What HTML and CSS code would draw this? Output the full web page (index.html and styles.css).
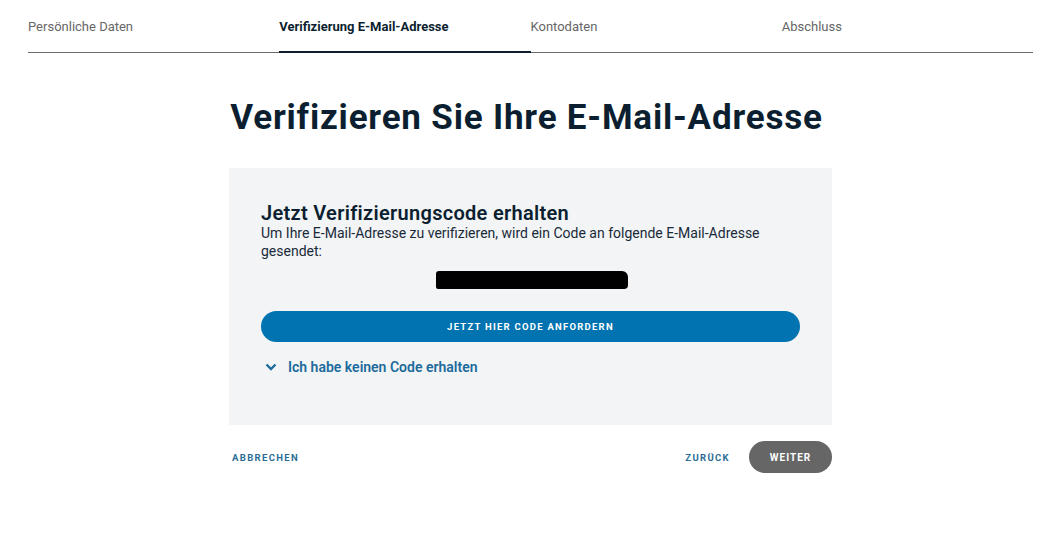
FILE: index.html
```html
<!DOCTYPE html>
<html lang="de">
<head>
    <meta charset="UTF-8">
    <meta name="viewport" content="width=device-width, initial-scale=1.0">
    <title>E-Mail verifizieren</title>
    <link rel="stylesheet" href="styles.css">
</head>
<body>
    <!-- Step indicator -->
    <nav class="steps">
        <div class="step">Persönliche Daten</div>
        <div class="step active">Verifizierung E-Mail-Adresse</div>
        <div class="step">Kontodaten</div>
        <div class="step">Abschluss</div>
    </nav>

    <main class="content">
        <h1>Verifizieren Sie Ihre E-Mail-Adresse</h1>

        <section class="card">
            <h2>Jetzt Verifizierungscode erhalten</h2>
            <p>Um Ihre E-Mail-Adresse zu verifizieren, wird ein Code an folgende E-Mail-Adresse gesendet:</p>
            <div class="email"><span class="redacted"></span></div>
            <button class="btn-primary" type="button">Jetzt hier Code anfordern</button>
            <a href="#" class="toggle">
                <svg width="12" height="8" viewBox="0 0 12 8"><path d="M1.5 1.5 6 6l4.5-4.5" fill="none" stroke="currentColor" stroke-width="2.4"/></svg>
                Ich habe keinen Code erhalten
            </a>
        </section>

        <div class="actions">
            <a href="#" class="link-btn">Abbrechen</a>
            <div class="actions-right">
                <a href="#" class="link-btn">Zurück</a>
                <button class="btn-secondary" type="button">Weiter</button>
            </div>
        </div>
    </main>
</body>
</html>
```

FILE: styles.css
```css
* {
    margin: 0;
    padding: 0;
    box-sizing: border-box;
}

body {
    font-family: Roboto, "Liberation Sans", sans-serif;
    color: #0c1f30;
    background: #fff;
}

.steps {
    display: grid;
    grid-template-columns: repeat(4, 1fr);
    padding: 0 19px 0 28px;
}

.step {
    font-size: 13px;
    color: #666;
    padding: 18px 0 17px;
    line-height: 17px;
    border-bottom: 1px solid #6b6b6b;
}

.step.active {
    color: #0c1f30;
    font-weight: 700;
    border-bottom: 2px solid #0c1f30;
    padding-bottom: 16px;
}

/* card column sits a little right of the page centre */
.content {
    width: 603px;
    margin-left: calc(50% - 297px);
}

h1 {
    font-size: 35px;
    font-weight: 700;
    line-height: 40px;
    text-align: center;
    margin: 45px 8px 30px 0;
    letter-spacing: 0.8px;
}

.card {
    background: #f2f4f5;
    padding: 34px 32px 50px;
    display: flex;
    flex-direction: column;
}

.card h2 {
    font-size: 20px;
    font-weight: 600;
    line-height: 22px;
    letter-spacing: 0.3px;
}

.card p {
    font-size: 14px;
    line-height: 18px;
    color: #1a2a3a;
}

.email {
    display: flex;
    justify-content: center;
    padding: 11px 0 22px 2px;
}

.redacted {
    width: 192px;
    height: 18px;
    background: #000;
    border-radius: 3px 6px 4px 2px;
}

.btn-primary {
    height: 31px;
    border: none;
    border-radius: 16px;
    background: #0073b0;
    color: #fff;
    font-family: inherit;
    font-size: 9.5px;
    font-weight: 700;
    letter-spacing: 1.25px;
    text-transform: uppercase;
}

.toggle {
    display: flex;
    align-items: center;
    gap: 11px;
    margin-top: 17px;
    padding-left: 4px;
    font-size: 14px;
    font-weight: 600;
    color: #1d6b9c;
    text-decoration: none;
}

.actions {
    display: flex;
    justify-content: space-between;
    align-items: center;
    margin-top: 16px;
}

.actions-right {
    display: flex;
    align-items: center;
    gap: 19px;
}

.link-btn {
    font-size: 9.5px;
    font-weight: 700;
    letter-spacing: 1.35px;
    text-transform: uppercase;
    color: #2a6e96;
    text-decoration: none;
    padding-left: 3px;
}

.btn-secondary {
    width: 83px;
    height: 32px;
    border: none;
    border-radius: 16px;
    background: #666;
    color: #fff;
    font-family: inherit;
    font-size: 10px;
    font-weight: 700;
    letter-spacing: 1px;
    text-transform: uppercase;
}
```
